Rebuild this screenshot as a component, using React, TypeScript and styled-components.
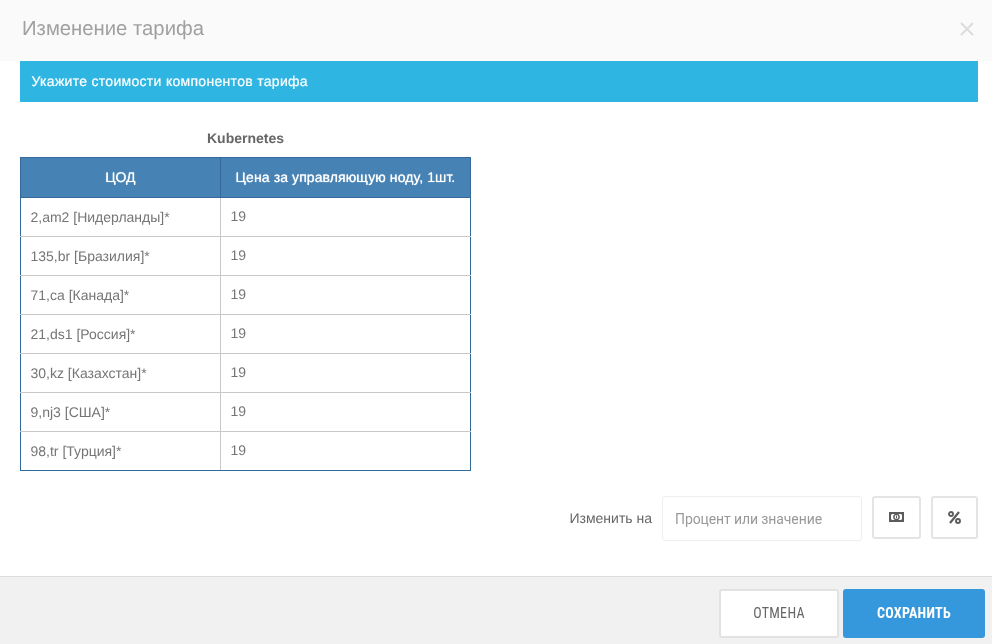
import { createGlobalStyle, styled } from 'styled-components';

const GlobalStyle = createGlobalStyle`
  html, body {
    margin: 0;
    padding: 0;
    background: #fff;
    font-family: "Liberation Sans", Arial, sans-serif;
    color: #666;
    text-rendering: geometricPrecision;
  }
`;

const Modal = styled.div`
  width: 992px;
  height: 644px;
  display: flex;
  flex-direction: column;
  overflow: hidden;
  will-change: transform;
`;

const Header = styled.header`
  height: 61px;
  flex: none;
  display: flex;
  align-items: center;
  justify-content: space-between;
  padding: 0 18px 3px 22px;
  box-sizing: border-box;
  background: #fafafa;
`;

const Title = styled.h4`
  margin: 0;
  font-size: 20.3px;
  font-weight: 400;
  color: #a0a0a0;
`;

const CloseButton = styled.button`
  border: 0;
  padding: 0;
  background: none;
  display: flex;
  color: #dcdcdc;
`;

const Body = styled.main`
  flex: 1;
  padding: 0 14px 0 20px;
  display: flex;
  flex-direction: column;
`;

const Alert = styled.div`
  height: 41px;
  padding: 0 11.5px 1px;
  box-sizing: border-box;
  display: flex;
  align-items: center;
  background: #2fb5e2;
  color: #fff;
  font-size: 14px;
  letter-spacing: 0.3px;
  -webkit-text-stroke: 0.2px #fff;
`;

const TableBlock = styled.section`
  width: 451px;
  margin-top: 28px;
`;

const TableTitle = styled.div`
  height: 27px;
  text-align: center;
  font-size: 14px;
  line-height: 16px;
  font-weight: 700;
  color: #666;
`;

const PriceTable = styled.table`
  width: 450px;
  border-collapse: collapse;
  table-layout: fixed;
  font-size: 14px;
  border: 1px solid #2f6a9c;
`;

const HeadCell = styled.th`
  height: 40px;
  padding: 0 0 1px;
  box-sizing: border-box;
  background: #4682b4;
  border: 1px solid #35699a;
  color: #fff;
  font-size: 14px;
  font-weight: 400;
  letter-spacing: 0.1px;
  text-shadow: 0 0 1px #fff;
  text-align: center;
  vertical-align: middle;
`;

const Cell = styled.td<{ $value?: boolean }>`
  height: 39px;
  padding: 0 9px ${(p) => (p.$value ? 2 : 0)}px 9.5px;
  box-sizing: border-box;
  color: #757575;
  border: 1px solid #c8c8c8;

  &:first-child {
    border-left: 1px solid #2f6a9c;
  }
  &:last-child {
    border-right: 1px solid #2f6a9c;
  }
  tr:last-child & {
    border-bottom: 1px solid #2f6a9c;
  }
`;

const ChangeRow = styled.div`
  margin-top: 25px;
  display: flex;
  align-items: flex-start;
  justify-content: flex-end;
`;

const ChangeLabel = styled.label`
  font-size: 14px;
  line-height: 45px;
  color: #666;
  margin-right: 10px;
`;

const ValueInput = styled.input`
  width: 200px;
  height: 45px;
  box-sizing: border-box;
  margin-right: 10px;
  padding: 0 12px;
  border: 1px solid #eee;
  border-radius: 3px;
  background: #fff;
  font-family: Roboto, sans-serif;
  font-size: 14px;
  letter-spacing: -0.1px;
  color: #666;

  &::placeholder {
    color: #999;
    opacity: 1;
  }
`;

const UnitButton = styled.button<{ $wide?: boolean }>`
  width: ${(p) => (p.$wide ? 49 : 47)}px;
  height: 43px;
  margin-left: ${(p) => (p.$wide ? 0 : 10)}px;
  padding: 0 0 1px;
  display: flex;
  align-items: center;
  justify-content: center;
  box-sizing: border-box;
  border: 2px solid #e4e4e4;
  border-radius: 3px;
  background: #fff;
  color: #5c5c5c;
`;

const Footer = styled.footer`
  height: 68px;
  flex: none;
  box-sizing: border-box;
  border-top: 1px solid #ddd;
  padding: 12px 7px 6px 0;
  background: #f1f1f1;
  display: flex;
  justify-content: flex-end;
  gap: 4px;
`;

const FooterButton = styled.button<{ $primary?: boolean }>`
  width: ${(p) => (p.$primary ? 142 : 120)}px;
  height: 49px;
  padding: 0 0 2px;
  box-sizing: border-box;
  border: ${(p) => (p.$primary ? '0' : '2px solid #e2e2e2')};
  border-radius: 3px;
  background: ${(p) => (p.$primary ? '#3598dc' : '#fff')};
  color: ${(p) => (p.$primary ? '#fff' : '#666')};
  font-family: Roboto, sans-serif;
  font-stretch: condensed;
  font-size: 14px;
  font-weight: ${(p) => (p.$primary ? 700 : 400)};
  letter-spacing: 0.3px;
`;

const MoneyIcon = () => (
  <svg width="15" height="10" viewBox="0 0 15 10">
    <path
      fillRule="evenodd"
      fill="currentColor"
      d="M0 0h15v10H0zM3 2 2 3v4l1 1h9l1-1V3l-1-1z"
    />
    <circle cx="7.5" cy="5" r="2.6" fill="none" stroke="currentColor" strokeWidth="1.4" />
    <path d="M7.5 3.6v2.8" stroke="currentColor" strokeWidth="1" />
  </svg>
);

const PercentIcon = () => (
  <svg width="13" height="13" viewBox="0 0 13 13">
    <g fill="none" stroke="currentColor">
      <circle cx="3" cy="3" r="2" strokeWidth="1.9" />
      <circle cx="10" cy="10" r="2" strokeWidth="1.9" />
      <path d="M11 1 2 12" strokeWidth="2.2" />
    </g>
  </svg>
);

const rows = [
  '2,am2 [Нидерланды]*',
  '135,br [Бразилия]*',
  '71,ca [Канада]*',
  '21,ds1 [Россия]*',
  '30,kz [Казахстан]*',
  '9,nj3 [США]*',
  '98,tr [Турция]*',
];

export default function App() {
  return (
    <Modal>
      <GlobalStyle />
      <Header>
        <Title>Изменение тарифа</Title>
        <CloseButton aria-label="Закрыть">
          <svg width="14" height="14" viewBox="0 0 14 14">
            <path d="M1 1 13 13M13 1 1 13" stroke="currentColor" strokeWidth="2" fill="none" />
          </svg>
        </CloseButton>
      </Header>
      <Body>
        <Alert>Укажите стоимости компонентов тарифа</Alert>
        <TableBlock>
          <TableTitle>Kubernetes</TableTitle>
          <PriceTable>
            <colgroup>
              <col width="200" />
              <col width="250" />
            </colgroup>
            <thead>
              <tr>
                <HeadCell>ЦОД</HeadCell>
                <HeadCell>Цена за управляющую ноду, 1шт.</HeadCell>
              </tr>
            </thead>
            <tbody>
              {rows.map((name) => (
                <tr key={name}>
                  <Cell>{name}</Cell>
                  <Cell $value>19</Cell>
                </tr>
              ))}
            </tbody>
          </PriceTable>
        </TableBlock>
        <ChangeRow>
          <ChangeLabel>Изменить на</ChangeLabel>
          <ValueInput placeholder="Процент или значение" />
          <UnitButton $wide aria-label="Значение">
            <MoneyIcon />
          </UnitButton>
          <UnitButton aria-label="Процент">
            <PercentIcon />
          </UnitButton>
        </ChangeRow>
      </Body>
      <Footer>
        <FooterButton>ОТМЕНА</FooterButton>
        <FooterButton $primary>СОХРАНИТЬ</FooterButton>
      </Footer>
    </Modal>
  );
}
